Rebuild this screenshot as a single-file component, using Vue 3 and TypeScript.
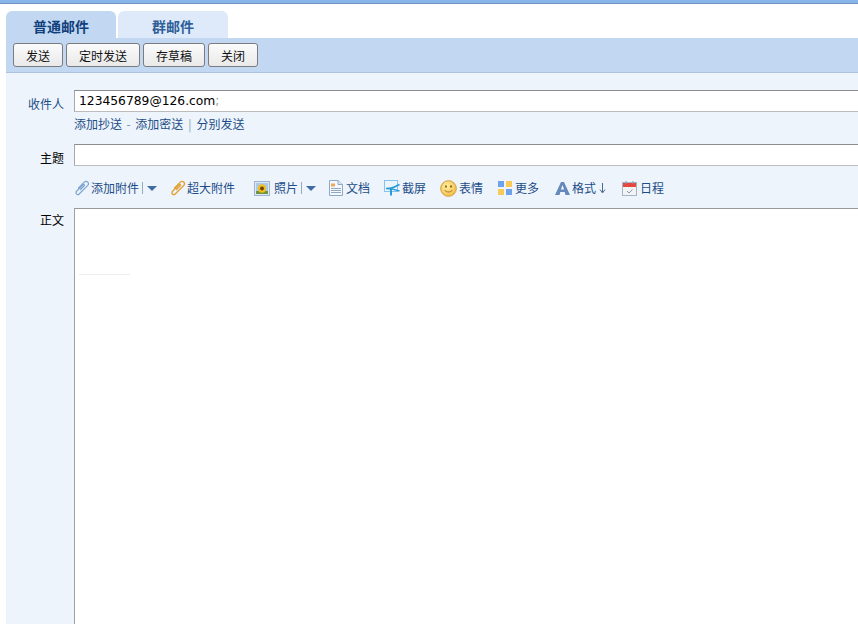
<script setup lang="ts">
const buttons = [
  { label: '发送', w: 50 },
  { label: '定时发送', w: 74 },
  { label: '存草稿', w: 62 },
  { label: '关闭', w: 50 },
]
</script>

<template>
  <div class="page">
    <div class="topbar"></div>
    <div class="tabs">
      <div class="tab active">普通邮件</div>
      <div class="tab">群邮件</div>
    </div>
    <div class="actions">
      <button v-for="b in buttons" :key="b.label" class="btn" :style="{ width: b.w + 'px' }">{{ b.label }}</button>
    </div>
    <div class="form">
      <div class="row to-row">
        <div class="label blue">收件人</div>
        <div class="field to"><span class="addr">123456789@126.com</span><span class="semi">;</span></div>
      </div>
      <div class="links">
        <a>添加抄送</a><span class="dash">-</span><a>添加密送</a><span class="sep">|</span><a>分别发送</a>
      </div>
      <div class="row subject-row">
        <div class="label">主题</div>
        <div class="field"></div>
      </div>
      <div class="tools">
        <span class="tool t-attach">
          <svg width="16" height="16" viewBox="0 0 16 16"><path d="M6.500 9.500 10 6C11 5 10 3.800 9 4.800L2.800 11C.8 13 3.200 16 5.200 14L13.500 5.700C16 3.200 12.800 -.3 10.300 2.200L4.500 8" fill="none" stroke="#7fa6d0" stroke-width="1.200" stroke-linecap="round"/></svg>
          添加附件<i class="bar"></i><i class="caret"></i>
        </span>
        <span class="tool t-big">
          <svg width="16" height="16" viewBox="0 0 16 16"><path d="M6.500 9.500 10 6C11 5 10 3.800 9 4.800L2.800 11C.8 13 3.200 16 5.200 14L13.500 5.700C16 3.200 12.800 -.3 10.300 2.200L4.500 8" fill="none" stroke="#e0a33c" stroke-width="1.400" stroke-linecap="round"/></svg>
          超大附件
        </span>
        <span class="tool t-photo">
          <svg width="16" height="15" viewBox="0 0 16 15"><rect x=".5" y=".5" width="15" height="14" fill="#dfe8f2" stroke="#9db5d2"/><rect x="2" y="2" width="12" height="11" fill="#a9cbe6"/><rect x="2" y="10" width="12" height="3" fill="#6f9440"/><circle cx="8" cy="7.500" r="4.200" fill="#f3bd1c"/><circle cx="8" cy="7.500" r="1.900" fill="#6b4216"/></svg>
          照片<i class="bar"></i><i class="caret"></i>
        </span>
        <span class="tool t-doc">
          <svg width="14" height="16" viewBox="0 0 14 16"><path d="M.5 .5h8.500l4.500 4v11h-13z" fill="#f4f7fb" stroke="#8ea8c8"/><path d="M9 .5v4h4.500" fill="#dfe8f2" stroke="#8ea8c8"/><rect x="2" y="3.500" width="4" height="3" fill="#f0a860"/><path d="M2 8.500h10M2 10.500h10M2 12.500h10" stroke="#8ea8c8"/></svg>
          文档
        </span>
        <span class="tool t-cut">
          <svg width="16" height="16" viewBox="0 0 16 16"><rect x=".5" y=".5" width="13" height="11" fill="#eaf5fc" stroke="#86c2ea"/><path d="M2 8.500C6 8.500 8 8.500 15.500 4.500M2 8.500C6 8.500 8 8.500 15.500 11" fill="none" stroke="#2b9bd8" stroke-width="1.600"/><path d="M7 8v7.500" stroke="#2b9bd8" stroke-width="2"/></svg>
          截屏
        </span>
        <span class="tool t-emoji">
          <svg width="17" height="17" viewBox="0 0 17 17"><defs><radialGradient id="fc" cx=".4" cy=".35" r=".7"><stop offset="0" stop-color="#fff0a0"/><stop offset="1" stop-color="#f3bd45"/></radialGradient></defs><circle cx="8.500" cy="8.500" r="7.800" fill="url(#fc)" stroke="#d29a35"/><ellipse cx="6" cy="6.500" rx=".9" ry="1.300" fill="#8a5a1c"/><ellipse cx="11" cy="6.500" rx=".9" ry="1.300" fill="#8a5a1c"/><path d="M4.800 10c1 2.600 6.400 2.600 7.400 0" fill="none" stroke="#a8701f"/></svg>
          表情
        </span>
        <span class="tool t-more">
          <svg width="14" height="14" viewBox="0 0 14 14"><rect x="0" y="0" width="6" height="6" fill="#6ea3ea"/><rect x="8" y="0" width="6" height="6" fill="#f7cb55"/><rect x="0" y="8" width="6" height="6" fill="#f7cb55"/><rect x="8" y="8" width="6" height="6" fill="#6ea3ea"/></svg>
          更多
        </span>
        <span class="tool t-format">
          <svg width="15" height="14" viewBox="0 0 15 14"><path d="M0 14 6 1h3l6 13h-4.500l-.8-3H5.300l-.8 3zM5.900 8.500h3.200L7.500 4z" fill="#6489ba"/></svg>
          格式<svg class="arrow" width="7" height="11" viewBox="0 0 7 11"><path d="M3.500 0v9M1 6.500 3.500 10 6 6.500" fill="none" stroke="#4a6a94"/></svg>
        </span>
        <span class="tool t-date">
          <svg width="15" height="15" viewBox="0 0 15 15"><rect x=".5" y="1.500" width="14" height="13" fill="#f2f3f5" stroke="#a9b4c4"/><rect x="1" y="2" width="13" height="4" fill="#e4483e"/><path d="M4 0v3M11 0v3" stroke="#8a97a8"/><path d="M5 10l2 2 3.500-3.500" fill="none" stroke="#8a97a8"/></svg>
          日程
        </span>
      </div>
      <div class="body-row">
        <div class="label body-label">正文</div>
        <div class="editor"><div class="sig"></div></div>
      </div>
    </div>
  </div>
</template>

<style>
html, body { margin: 0; background: #fff; overflow: hidden; }
</style>

<style scoped>
.page {
  width: 858px;
  height: 624px;
  overflow: hidden;
  display: flex;
  flex-direction: column;
  font: 12px/16px "Noto Sans CJK SC", "Liberation Sans", sans-serif;
  color: #000;
  background: #fff;
}
.topbar { height: 3px; background: #88b5e9; border-bottom: 1px solid #6f94c4; flex: none; }
.tabs { display: flex; gap: 2px; margin: 7px 0 0 6px; height: 27px; flex: none; }
.tab {
  width: 110px;
  background: #deeafa;
  border-radius: 6px 6px 0 0;
  text-align: center;
  line-height: 30px;
  font-size: 14px;
  font-weight: 700;
  color: #2e5f98;
}
.active { background: #c1d7f2; color: #103f7c; }
.actions {
  flex: none;
  margin-left: 6px;
  height: 35px;
  box-sizing: border-box;
  padding: 5px 0 0 7px;
  display: flex;
  gap: 3px;
  background: #c1d7f2;
  border-bottom: 1px solid #acc3e0;
}
.btn {
  height: 24px;
  padding: 1px 0 0;
  border: 1px solid #7c7c7c;
  border-radius: 3px;
  background: linear-gradient(#fbfbfb, #e9e9e9);
  font: 12px/21px "Noto Sans CJK SC", sans-serif;
  color: #111;
}
.form { flex: 1; margin-left: 6px; background: #eef4fb; min-height: 0; overflow: hidden; }
.row { display: flex; height: 22px; }
.to-row { margin-top: 17px; }
.subject-row { margin-top: 12px; }
.label { width: 58px; flex: none; text-align: right; line-height: 27px; margin-right: 10px; }
.blue { color: #1c4d88; line-height: 28px; }
.body-label { line-height: 24px; }
.field {
  flex: 1;
  box-sizing: border-box;
  background: #fff;
  border-top: 1px solid #8c8c8c;
  border-left: 1px solid #a8a8a8;
  border-bottom: 1px solid #bcbcbc;
  padding-left: 4px;
  line-height: 20px;
  font-size: 13px;
}
.to { font-family: "DejaVu Sans", sans-serif; font-size: 12.300px; }
.semi { color: #999; }
.links { height: 16px; margin: 4px 0 0 68px; color: #1c4d88; display: flex; align-items: center; }
.dash { margin: 0 4.500px; color: #6f8fb4; }
.sep { margin: 0 5px 0 5px; color: #8aa0ba; }
.tools { height: 22px; margin: 11px 0 0 68px; position: relative; display: flex; align-items: center; color: #1c4d88; }
.tool { display: flex; align-items: center; white-space: nowrap; flex: none; }
.t-attach { width: 96px; gap: 1px; }
.t-big { width: 84px; gap: 1px; }
.t-photo { width: 75px; gap: 4px; }
.t-doc { width: 55px; gap: 3px; }
.t-cut { width: 56px; gap: 2px; }
.t-emoji { width: 58px; gap: 2px; }
.t-more { width: 57px; gap: 3px; }
.t-format { width: 67px; gap: 2px; }
.t-date { gap: 3px; }
.bar { width: 1px; height: 12px; background: #9ab; margin: 0 1px 0 2px; }
.caret { width: 0; height: 0; border: 5px solid transparent; border-top: 5px solid #3f6ca6; border-bottom: 0; margin-left: 2px; }
.t-photo .bar { margin: 0 0 0 -1px; }
.t-photo .caret { margin-left: 0; }
.arrow { margin-left: 1px; }
.body-row { display: flex; margin-top: 9px; height: 430px; }
.editor {
  flex: 1;
  position: relative;
  background: #fff;
  border-top: 1px solid #999;
  border-left: 1px solid #a0a0a0;
}
.sig { position: absolute; left: 4px; top: 65px; width: 51px; height: 1px; background: #ececec; }
</style>
